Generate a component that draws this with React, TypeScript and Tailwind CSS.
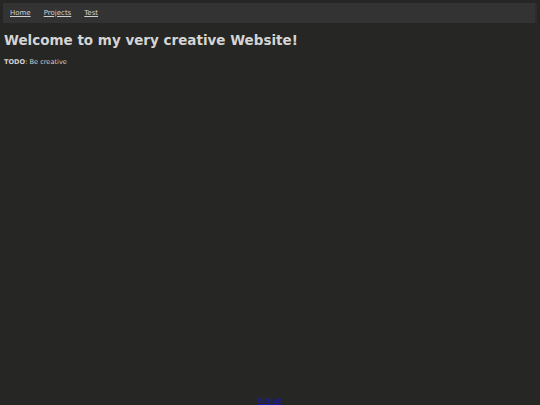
export default function App() {
  return (
    <div className="flex min-h-[405px] flex-col bg-[#262625] px-[3px] pt-[3px] text-[#d0d0d0] font-['DejaVu_Sans',sans-serif]">
      <nav className="flex h-[20px] items-center gap-[13px] bg-[#333333] px-[7px] text-[7px] border-r-2 border-[#2c2c2c]">
        <a href="#" className="underline text-[#cfcfcf]">Home</a>
        <a href="#" className="underline text-[#cfcfcf]">Projects</a>
        <a href="#" className="underline text-[#cfcfcf]">Test</a>
      </nav>
      <main className="flex-1 px-[1px]">
        <h1 className="mt-[7px] text-[13.5px] font-bold text-[#d4d4d4]">Welcome to my very creative Website!</h1>
        <p className="mt-[8px] text-[6.6px]">
          <b>TODO</b>: Be creative
        </p>
      </main>
      <footer className="flex justify-center h-[9px] overflow-hidden">
        <a href="#" className="text-[7px] text-[#1a1aa8] underline">GitHub</a>
      </footer>
    </div>
  );
}
